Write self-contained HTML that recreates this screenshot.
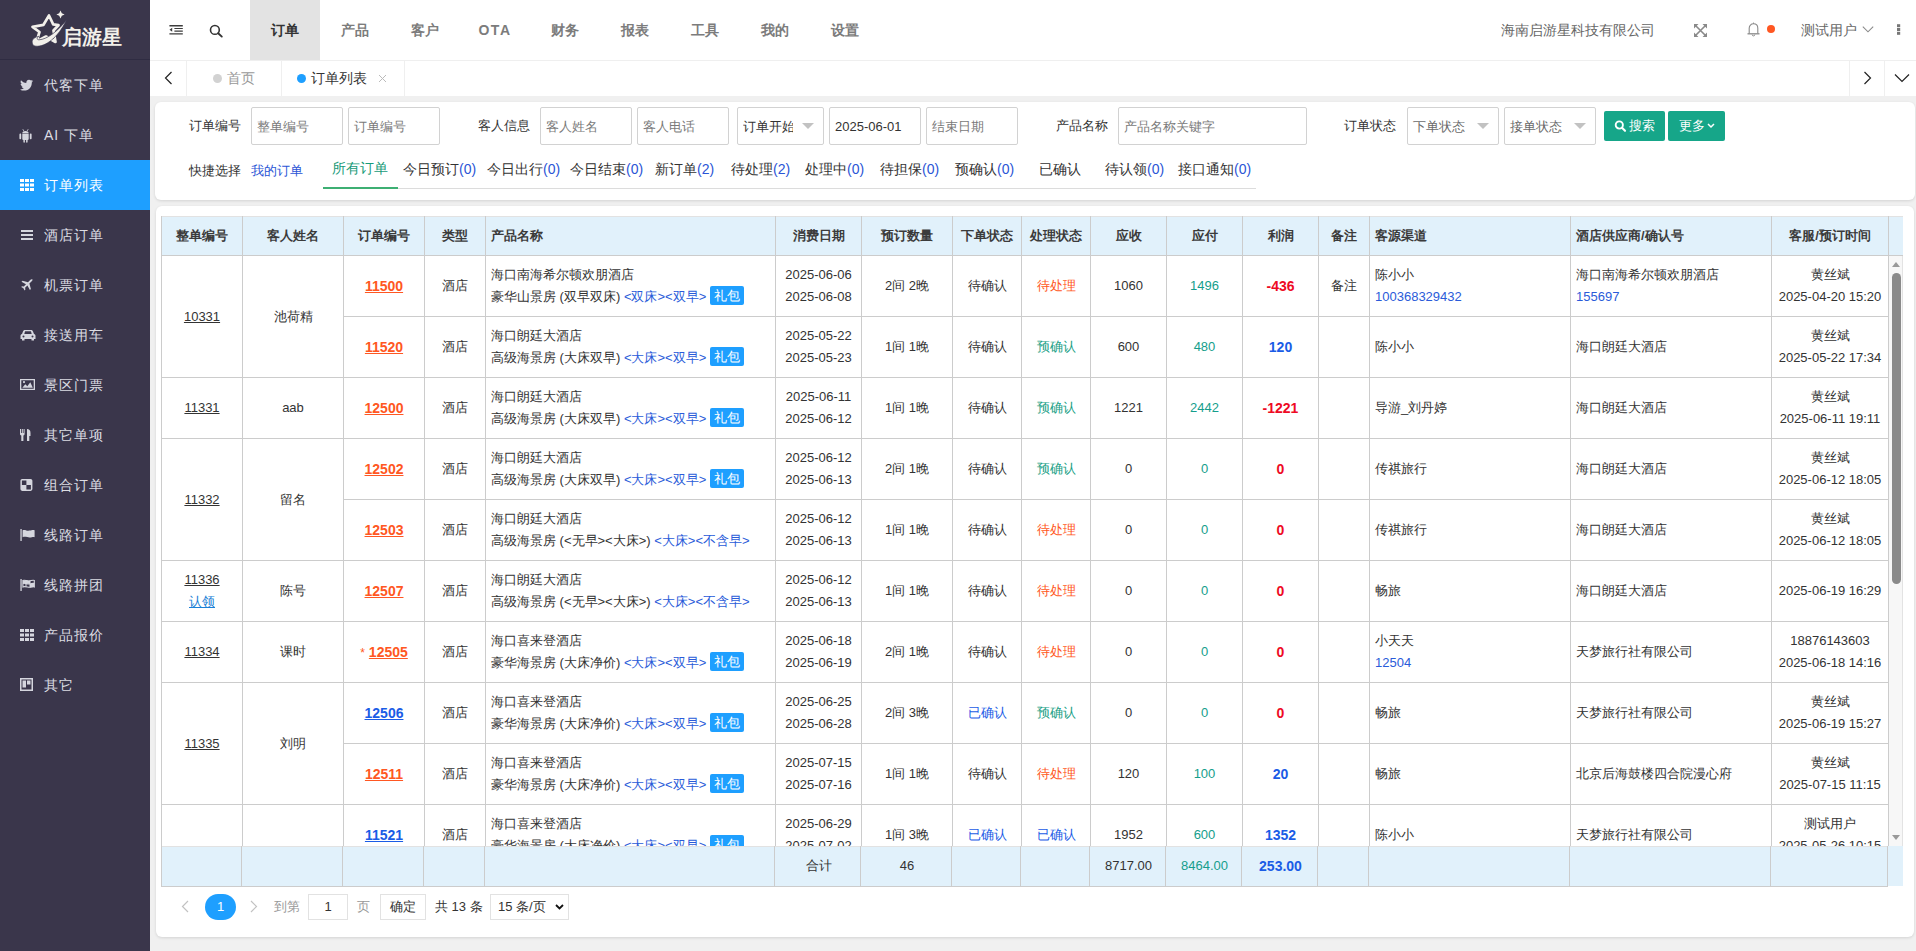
<!DOCTYPE html>
<html><head><meta charset="utf-8"><title>订单列表</title>
<style>
*{margin:0;padding:0;box-sizing:border-box}
html,body{width:1916px;height:951px;overflow:hidden}
body{position:relative;background:#f0f0f0;font-family:"Liberation Sans",sans-serif;color:#333;font-size:13px}
.a{position:absolute}
.side{left:0;top:0;width:150px;height:951px;background:#3a364b}
.logo{left:0;top:0;width:150px;height:60px;border-bottom:1px solid #2f2c42}
.mi{left:0;width:150px;height:50px;color:#dcdde3;font-size:14px}
.mi .t{position:absolute;left:44px;top:0;line-height:50px;white-space:nowrap;letter-spacing:1px}
.mi svg{position:absolute;left:20px;top:18px}
.mi.on{background:#1e9fff;color:#fff}
.top{left:150px;top:0;width:1766px;height:60px;background:#fff}
.nav{top:0;height:60px;line-height:60px;width:70px;text-align:center;font-size:14px;color:#7c7c7c;font-weight:bold}
.nav.on{background:#e3e3e3;color:#333}
.tabs{left:150px;top:60px;width:1766px;height:36px;background:#fff;border-top:1px solid #efefef}
.vl{background:#efefef;width:1px}
.card{background:#fff;border-radius:6px;box-shadow:0 1px 3px rgba(0,0,0,.12)}
.lbl{font-size:13px;color:#333;white-space:nowrap}
.inp{height:38px;border:1px solid #d2d2d2;border-radius:2px;background:#fff;font-size:13px;color:#7a7a7a;line-height:37px;padding-left:5px;white-space:nowrap;overflow:hidden}
.qs{font-size:14px;white-space:nowrap;color:#333}
.qs b{font-weight:normal;color:#2b55d6}
.cell{position:absolute;display:flex;flex-direction:column;justify-content:center;align-items:center;text-align:center;white-space:nowrap;font-size:13px;line-height:22px;color:#333}
.cell.l{align-items:flex-start;padding-left:5px;text-align:left}
.hl{position:absolute;height:1px;background:#cccccc}
.vln{position:absolute;width:1px;background:#cccccc}
.hd{font-weight:bold;color:#3b3b3b}
.ord{font-weight:bold;text-decoration:underline;font-size:14px}
.org{color:#ff5722}
.blu{color:#1a5ce6}
.tl{color:#159e8c}
.grn{color:#17a085}
.red{color:#ee0a24}
.lb{color:#2a5bd9}
.badge{display:inline-block;background:#1e9fff;color:#fff;padding:0 4px;line-height:19px;height:19px;margin-left:4px;border-radius:2px;vertical-align:1px}
.u{text-decoration:underline}
</style></head><body>
<div class="a side"></div>
<div class="a logo"></div>
<svg class="a" style="left:0;top:0" width="150" height="60" viewBox="0 0 150 60">
<path d="M49 15.5 L53.2 24.3 L58.5 25.2 L53.5 30.5 L55.5 42 L46 36.5 L36.5 41.5 L39.5 32 L32.5 26.8 L43.5 24.8 Z" fill="none" stroke="#f2f0ea" stroke-width="2.7" stroke-linejoin="round"/>
<path d="M36 46.2 C45 47 58 38 66.5 20 C58 31 47 39.5 39 39.8 C36.5 39.8 36.8 37.8 38.8 36.3 C35 36.8 31.3 39.5 32.3 43.2 C32.8 45.2 34.3 46.2 36 46.2 Z" fill="#f2f0ea" stroke="#393650" stroke-width="0.7"/>
<path d="M60.5 10.5 L61.8 13.3 L64.6 14.5 L61.8 15.7 L60.5 18.5 L59.2 15.7 L56.4 14.5 L59.2 13.3 Z" fill="#f2f0ea"/>
</svg>
<div class="a" style="left:62px;top:25px;font-size:20px;font-weight:bold;color:#f2f0ea;line-height:24px">启游星</div>
<div class="a mi" style="top:60px"><svg width="14" height="14" viewBox="0 0 14 14"><path d="M13 3 c-.5.2-1 .4-1.5.4.6-.3 1-.8 1.2-1.4-.5.3-1.1.5-1.7.6C10.5 2 9.8 1.7 9 1.7c-1.5 0-2.7 1.2-2.7 2.7 0 .2 0 .4.1.6C4.2 4.9 2.3 3.9 1 2.3c-.2.4-.4.9-.4 1.4 0 .9.5 1.8 1.2 2.3-.4 0-.9-.1-1.2-.3 0 1.3.9 2.4 2.2 2.7-.4.1-.8.1-1.2 0 .3 1.1 1.3 1.9 2.5 1.9C3.200 11 2 11.4.6 11.4H0c1.200.8 2.6 1.200 4.100 1.200 5 0 7.700-4.100 7.700-7.700v-.3C12.300 4.100 12.700 3.600 13 3z" fill="#d5d6de"/></svg><span class="t">代客下单</span></div>
<div class="a mi" style="top:110px"><svg width="14" height="15" viewBox="0 0 14 15" style="left:19px"><path d="M3.300 5.200C3.300 2.300 9.700 2.300 9.700 5.200z M3.300 5.800h6.400v5.200c0 .5-.4.9-.9.9H4.200c-.5 0-.9-.4-.9-.9z M0.400 6.600c0-.6.4-1 .9-1s.9.4.9 1v3.600c0 .6-.4 1-.9 1s-.9-.4-.9-1z M10.800 6.600c0-.6.4-1 .9-1s.9.4.9 1v3.600c0 .6-.4 1-.9 1s-.9-.4-.9-1z M4.400 11.500h1.500v2.600c0 .4-.3.7-.75.7s-.75-.3-.75-.7z M7.100 11.500h1.500v2.600c0 .4-.3.7-.75.7s-.75-.3-.75-.7z" fill="#d5d6de"/><path d="M3.800 1.200l1.100 1.800M9.200 1.200L8.100 3" stroke="#d5d6de" stroke-width=".8"/></svg><span class="t">AI 下单</span></div>
<div class="a mi on" style="top:160px"><svg width="14" height="14" viewBox="0 0 14 14"><path d="M0 1h4v3H0zM5 1h4v3H5zM10 1h4v3h-4zM0 5.5h4v3H0zM5 5.5h4v3H5zM10 5.5h4v3h-4zM0 10h4v3H0zM5 10h4v3H5zM10 10h4v3h-4z" fill="#fff"/></svg><span class="t">订单列表</span></div>
<div class="a mi" style="top:210px"><svg width="14" height="14" viewBox="0 0 14 14"><path d="M1 2h12v2H1zM1 6h12v2H1zM1 10h12v2H1z" fill="#d5d6de"/></svg><span class="t">酒店订单</span></div>
<div class="a mi" style="top:260px"><svg width="14" height="14" viewBox="0 0 14 14"><path d="M12.5 1.5c-.6-.6-1.6-.3-2.300.4L8 4.200 2.5 2.700 1.500 3.700 6 6.200 3.800 8.500 2 8.200 1.200 9l2.200 1.200L4.600 12.400 5.400 11.600 5.100 9.800 7.400 7.500 9.900 12l1-1L9.400 5.500 11.700 3.300c.7-.7 1-1.700.8-1.800z" fill="#d5d6de"/></svg><span class="t">机票订单</span></div>
<div class="a mi" style="top:310px"><svg width="16" height="14" viewBox="0 0 16 14"><path d="M3 3.5C3.300 2.500 4 2 5 2h6c1 0 1.700.5 2 1.500L14 6c1 .3 1.500 1 1.500 2v3h-1.500v1.500h-2.500V11h-7v1.500H2V11H.5V8c0-1 .5-1.700 1.500-2z M4.300 6h7.400l-.6-2.300c-.1-.3-.3-.4-.6-.4H5.500c-.3 0-.5.1-.6.4z M3.500 9.500a1 1 0 100-2 1 1 0 000 2z M12.500 9.500a1 1 0 100-2 1 1 0 000 2z" fill="#d5d6de" fill-rule="evenodd"/></svg><span class="t">接送用车</span></div>
<div class="a mi" style="top:360px"><svg width="15" height="13" viewBox="0 0 15 13"><path d="M0 1h15v11H0z M1.300 2.300v8.400h12.400V2.300z M2.300 9.700l3-3.500 2 2 3-4 2.500 5.500z M4 5.200a1.100 1.100 0 100-2.200 1.100 1.100 0 000 2.200z" fill="#d5d6de" fill-rule="evenodd"/></svg><span class="t">景区门票</span></div>
<div class="a mi" style="top:410px"><svg width="12" height="14" viewBox="0 0 12 14"><path d="M0 1h1v4h.8V1h1v4h.8V1h1v5c0 .8-.5 1.300-1.200 1.400V13H1.300V7.400C.5 7.300 0 6.800 0 6z M7 1c2 0 3.500 1 3.500 4v3H9.300v5H7z" fill="#d5d6de"/></svg><span class="t">其它单项</span></div>
<div class="a mi" style="top:460px"><svg width="14" height="14" viewBox="0 0 14 14"><rect x="0.4" y="0.9" width="12" height="12" rx="1.8" fill="#d5d6de"/><path d="M1.9 2.4h4.5v4.5H1.9z M6.4 6.9h4.5v4.5H6.4z" fill="#3a364b"/></svg><span class="t">组合订单</span></div>
<div class="a mi" style="top:510px"><svg width="16" height="14" viewBox="0 0 16 14"><path d="M0.4 1h1.3v12H0.4z M2.6 2.2C5 1.2 7 3.2 9.5 2.6S13 1.6 14.6 2.2V9.2C12.8 8.6 11.5 9.8 9.5 9.6S5 8.2 2.6 9.2Z" fill="#d5d6de"/></svg><span class="t">线路订单</span></div>
<div class="a mi" style="top:560px"><svg width="16" height="14" viewBox="0 0 16 14"><path d="M0.4 1h1.3v12H0.4z" fill="#d5d6de"/><path d="M2.9 2.4C5 1.5 7 3.4 9.5 2.9S13 1.9 14.3 2.4V8.9C12.8 8.4 11.5 9.4 9.5 9.3S5 8.1 2.9 8.9Z" fill="none" stroke="#d5d6de" stroke-width="1.1"/><path d="M3 5.5C5 4.6 7 6.4 9.5 6S13 5 14.3 5.5" fill="none" stroke="#d5d6de" stroke-width="1.1"/><path d="M6 2.3v6.5 M10 2.7v6.6" stroke="#d5d6de" stroke-width="1"/><path d="M3 2.4L6 2.3V5.5L3 5.5Z M10 5.9L14.3 5.5V8.9L10 9.3Z M6 5.6L10 5.9V2.9L6 2.3Z" fill="#d5d6de"/></svg><span class="t">线路拼团</span></div>
<div class="a mi" style="top:610px"><svg width="14" height="14" viewBox="0 0 14 14"><path d="M0 1h4v3H0zM5 1h4v3H5zM10 1h4v3h-4zM0 5.500h4v3H0zM5 5.500h4v3H5zM10 5.500h4v3h-4zM0 10h4v3H0zM5 10h4v3H5zM10 10h4v3h-4z" fill="#d5d6de"/></svg><span class="t">产品报价</span></div>
<div class="a mi" style="top:660px"><svg width="13" height="13" viewBox="0 0 13 13"><path d="M0 0h13v13H0z M1.500 1.500v10h10v-10z M2.500 2.500h3.500v7H2.500z M7 2.500h3.500v4H7z" fill="#d5d6de" fill-rule="evenodd"/></svg><span class="t">其它</span></div>
<div class="a top"></div>
<svg class="a" style="left:0;top:0" width="240" height="60" viewBox="0 0 240 60"><path d="M169.4 25h13.4v1.4H169.4z M174.4 28h8.4v1.1h-8.4z M174.4 30.6h8.4v1.1h-8.4z M169.4 33.2h13.4v1.4H169.4z M172.2 27.8v4L169.5 29.8z" fill="#3d3d3d"/><circle cx="214.9" cy="29.9" r="4.4" fill="none" stroke="#333" stroke-width="1.6"/><path d="M218.2 33.2l3.6 3.4" stroke="#333" stroke-width="1.9" stroke-linecap="round"/></svg>
<div class="a nav on" style="left:250px">订单</div>
<div class="a nav" style="left:320px">产品</div>
<div class="a nav" style="left:390px">客户</div>
<div class="a nav" style="left:460px"><span style="letter-spacing:1.5px">OTA</span></div>
<div class="a nav" style="left:530px">财务</div>
<div class="a nav" style="left:600px">报表</div>
<div class="a nav" style="left:670px">工具</div>
<div class="a nav" style="left:740px">我的</div>
<div class="a nav" style="left:810px">设置</div>
<div class="a" style="left:1501px;top:0;line-height:60px;font-size:14px;color:#666">海南启游星科技有限公司</div>
<svg class="a" style="left:1694px;top:24px" width="13" height="13" viewBox="0 0 13 13"><path d="M0 0h4.5L0 4.5z M13 0v4.5L8.5 0z M0 13V8.5L4.5 13z M13 13H8.5L13 8.5z" fill="#8a8a8a"/><path d="M1.5 1.5l10 10M11.5 1.5l-10 10" stroke="#8a8a8a" stroke-width="1.6"/></svg>
<svg class="a" style="left:1747px;top:22px" width="13" height="15" viewBox="0 0 13 15"><path d="M2.2 11.5V6.2C2.2 3.6 4 1.8 6.5 1.8S10.8 3.6 10.8 6.2v5.3" fill="none" stroke="#8a8a8a" stroke-width="1.1"/><path d="M0.5 11.8h12" stroke="#8a8a8a" stroke-width="1.3"/><path d="M6.5 0.6v1.2" stroke="#8a8a8a" stroke-width="1"/><path d="M5.2 12.6a1.3 1.3 0 002.6 0" fill="none" stroke="#8a8a8a" stroke-width="1"/></svg>
<div class="a" style="left:1767px;top:25px;width:8px;height:8px;border-radius:50%;background:#ff5722"></div>
<div class="a" style="left:1801px;top:0;line-height:60px;font-size:14px;color:#666">测试用户</div>
<svg class="a" style="left:1862px;top:26px" width="12" height="7" viewBox="0 0 12 7"><path d="M.8.6l5.2 5.2 5.2-5.2" fill="none" stroke="#8a8a8a" stroke-width="1.1"/></svg>
<svg class="a" style="left:1896px;top:24px" width="5" height="12" viewBox="0 0 5 12"><rect x="1" y=".2" width="3.2" height="3" fill="#777"/><rect x="1" y="4" width="3.2" height="3" fill="#777"/><rect x="1" y="7.8" width="3.2" height="3" fill="#777"/></svg>
<div class="a tabs"></div>
<div class="a vl" style="left:186px;top:61px;height:35px"></div>
<div class="a vl" style="left:281px;top:61px;height:35px"></div>
<div class="a vl" style="left:404px;top:61px;height:35px"></div>
<div class="a vl" style="left:1849px;top:61px;height:35px"></div>
<div class="a vl" style="left:1884px;top:61px;height:35px"></div>
<svg class="a" style="left:164px;top:71px" width="9" height="14" viewBox="0 0 9 14"><path d="M7.500 1L1.500 7l6 6" fill="none" stroke="#222" stroke-width="1.200"/></svg>
<svg class="a" style="left:1863px;top:71px" width="9" height="14" viewBox="0 0 9 14"><path d="M1.500 1l6 6-6 6" fill="none" stroke="#222" stroke-width="1.200"/></svg>
<svg class="a" style="left:1894px;top:73px" width="16" height="10" viewBox="0 0 16 10"><path d="M1 1.500l7 7 7-7" fill="none" stroke="#222" stroke-width="1.200"/></svg>
<div class="a" style="left:213px;top:74px;width:9px;height:9px;border-radius:50%;background:#d2d2d2"></div>
<div class="a" style="left:227px;top:60px;line-height:36px;font-size:14px;color:#999">首页</div>
<div class="a" style="left:297px;top:74px;width:9px;height:9px;border-radius:50%;background:#1e9fff"></div>
<div class="a" style="left:311px;top:60px;line-height:36px;font-size:14px;color:#333">订单列表</div>
<svg class="a" style="left:378px;top:74px" width="9" height="9" viewBox="0 0 9 9"><path d="M1 1l7 7M8 1L1 8" stroke="#bbb" stroke-width="1"/></svg>
<div class="a card" style="left:155px;top:102px;width:1760px;height:98px"></div>
<div class="a lbl" style="left:189px;top:116px;line-height:20px">订单编号</div>
<div class="a inp" style="left:251px;top:107px;width:92px;color:#7a7a7a">整单编号</div>
<div class="a inp" style="left:348px;top:107px;width:92px;color:#7a7a7a">订单编号</div>
<div class="a lbl" style="left:478px;top:116px;line-height:20px">客人信息</div>
<div class="a inp" style="left:540px;top:107px;width:92px;color:#7a7a7a">客人姓名</div>
<div class="a inp" style="left:637px;top:107px;width:92px;color:#7a7a7a">客人电话</div>
<div class="a inp" style="left:737px;top:107px;width:87px;color:#333"><span style="display:inline-block;width:50px;overflow:hidden;vertical-align:top">订单开始</span></div>
<div class="a" style="left:802px;top:123px;width:0;height:0;border-left:6px solid transparent;border-right:6px solid transparent;border-top:6px solid #c2c2c2"></div>
<div class="a inp" style="left:829px;top:107px;width:92px;color:#333">2025-06-01</div>
<div class="a inp" style="left:926px;top:107px;width:92px;color:#7a7a7a">结束日期</div>
<div class="a lbl" style="left:1056px;top:116px;line-height:20px">产品名称</div>
<div class="a inp" style="left:1118px;top:107px;width:189px;color:#7a7a7a">产品名称关键字</div>
<div class="a lbl" style="left:1344px;top:116px;line-height:20px">订单状态</div>
<div class="a inp" style="left:1407px;top:107px;width:92px;color:#6a6a6a">下单状态</div>
<div class="a" style="left:1477px;top:123px;width:0;height:0;border-left:6px solid transparent;border-right:6px solid transparent;border-top:6px solid #c2c2c2"></div>
<div class="a inp" style="left:1504px;top:107px;width:92px;color:#6a6a6a">接单状态</div>
<div class="a" style="left:1574px;top:123px;width:0;height:0;border-left:6px solid transparent;border-right:6px solid transparent;border-top:6px solid #c2c2c2"></div>
<div class="a" style="left:1604px;top:111px;width:61px;height:30px;background:#16a689;border-radius:2px;color:#fff;font-size:13px;line-height:30px;padding-left:25px">搜索</div>
<svg class="a" style="left:1614px;top:120px" width="13" height="13" viewBox="0 0 13 13"><circle cx="5.300" cy="5" r="3.600" fill="none" stroke="#fff" stroke-width="1.900"/><path d="M8 7.800l3 3" stroke="#fff" stroke-width="2.100" stroke-linecap="round"/></svg>
<div class="a" style="left:1668px;top:111px;width:57px;height:30px;background:#16a689;border-radius:2px;color:#fff;font-size:13px;line-height:30px;padding-left:11px">更多</div>
<svg class="a" style="left:1707px;top:123px" width="8" height="6" viewBox="0 0 8 6"><path d="M1 1l3 3 3-3" fill="none" stroke="#fff" stroke-width="1.500"/></svg>
<div class="a lbl" style="left:189px;top:161px;line-height:20px">快捷选择</div>
<div class="a qs" style="left:251px;top:161px;line-height:20px;color:#2b55d6;font-size:13px">我的订单</div>
<div class="a" style="left:323px;top:188px;width:933px;height:1px;background:#dcdcdc"></div>
<div class="a" style="left:323px;top:187px;width:75px;height:2px;background:#3daf73"></div>
<div class="a qs" style="left:332px;top:158px;line-height:20px;color:#179a78">所有订单</div>
<div class="a qs" style="left:403px;top:159px;line-height:20px">今日预订<b>(0)</b></div>
<div class="a qs" style="left:487px;top:159px;line-height:20px">今日出行<b>(0)</b></div>
<div class="a qs" style="left:570px;top:159px;line-height:20px">今日结束<b>(0)</b></div>
<div class="a qs" style="left:655px;top:159px;line-height:20px">新订单<b>(2)</b></div>
<div class="a qs" style="left:731px;top:159px;line-height:20px">待处理<b>(2)</b></div>
<div class="a qs" style="left:805px;top:159px;line-height:20px">处理中<b>(0)</b></div>
<div class="a qs" style="left:880px;top:159px;line-height:20px">待担保<b>(0)</b></div>
<div class="a qs" style="left:955px;top:159px;line-height:20px">预确认<b>(0)</b></div>
<div class="a qs" style="left:1039px;top:159px;line-height:20px">已确认</div>
<div class="a qs" style="left:1105px;top:159px;line-height:20px">待认领<b>(0)</b></div>
<div class="a qs" style="left:1178px;top:159px;line-height:20px">接口通知<b>(0)</b></div>
<div class="a card" style="left:156px;top:206px;width:1758px;height:731px"></div>
<div class="a" style="left:161px;top:216px;width:1742px;height:40px;background:#e1f1fb"></div>
<div class="cell" style="left:162px;top:216px;width:80px;height:39px;"><span class="hd">整单编号</span></div>
<div class="cell" style="left:243px;top:216px;width:100px;height:39px;"><span class="hd">客人姓名</span></div>
<div class="cell" style="left:344px;top:216px;width:80px;height:39px;"><span class="hd">订单编号</span></div>
<div class="cell" style="left:425px;top:216px;width:60px;height:39px;"><span class="hd">类型</span></div>
<div class="cell l" style="left:486px;top:216px;width:289px;height:39px;"><span class="hd">产品名称</span></div>
<div class="cell" style="left:776px;top:216px;width:85px;height:39px;"><span class="hd">消费日期</span></div>
<div class="cell" style="left:862px;top:216px;width:90px;height:39px;"><span class="hd">预订数量</span></div>
<div class="cell" style="left:953px;top:216px;width:68px;height:39px;"><span class="hd">下单状态</span></div>
<div class="cell" style="left:1022px;top:216px;width:68px;height:39px;"><span class="hd">处理状态</span></div>
<div class="cell" style="left:1091px;top:216px;width:75px;height:39px;"><span class="hd">应收</span></div>
<div class="cell" style="left:1167px;top:216px;width:75px;height:39px;"><span class="hd">应付</span></div>
<div class="cell" style="left:1243px;top:216px;width:75px;height:39px;"><span class="hd">利润</span></div>
<div class="cell" style="left:1319px;top:216px;width:50px;height:39px;"><span class="hd">备注</span></div>
<div class="cell l" style="left:1370px;top:216px;width:200px;height:39px;"><span class="hd">客源渠道</span></div>
<div class="cell l" style="left:1571px;top:216px;width:200px;height:39px;"><span class="hd">酒店供应商/确认号</span></div>
<div class="cell" style="left:1772px;top:216px;width:116px;height:39px;"><span class="hd">客服/预订时间</span></div>
<div class="hl" style="left:161px;top:216px;width:1742px;background:#e2e2e2"></div>
<div class="hl" style="left:161px;top:255px;width:1742px"></div>
<div class="vln" style="left:161px;top:216px;height:39px"></div>
<div class="vln" style="left:242px;top:216px;height:39px"></div>
<div class="vln" style="left:343px;top:216px;height:39px"></div>
<div class="vln" style="left:424px;top:216px;height:39px"></div>
<div class="vln" style="left:485px;top:216px;height:39px"></div>
<div class="vln" style="left:775px;top:216px;height:39px"></div>
<div class="vln" style="left:861px;top:216px;height:39px"></div>
<div class="vln" style="left:952px;top:216px;height:39px"></div>
<div class="vln" style="left:1021px;top:216px;height:39px"></div>
<div class="vln" style="left:1090px;top:216px;height:39px"></div>
<div class="vln" style="left:1166px;top:216px;height:39px"></div>
<div class="vln" style="left:1242px;top:216px;height:39px"></div>
<div class="vln" style="left:1318px;top:216px;height:39px"></div>
<div class="vln" style="left:1369px;top:216px;height:39px"></div>
<div class="vln" style="left:1570px;top:216px;height:39px"></div>
<div class="vln" style="left:1771px;top:216px;height:39px"></div>
<div class="vln" style="left:1888px;top:216px;height:39px"></div>
<div class="a" style="left:0;top:0;width:1916px;height:951px;clip-path:inset(256px 0 105px 0)">
<div class="cell" style="left:162px;top:256px;width:80px;height:121px;"><span class="u">10331</span></div>
<div class="cell" style="left:243px;top:256px;width:100px;height:121px;">池荷精</div>
<div class="cell" style="left:162px;top:378px;width:80px;height:60px;"><span class="u">11331</span></div>
<div class="cell" style="left:243px;top:378px;width:100px;height:60px;">aab</div>
<div class="cell" style="left:162px;top:439px;width:80px;height:121px;"><span class="u">11332</span></div>
<div class="cell" style="left:243px;top:439px;width:100px;height:121px;">留名</div>
<div class="cell" style="left:162px;top:561px;width:80px;height:60px;"><span class="u">11336</span><span class="u blu" style="color:#1a7fd6">认领</span></div>
<div class="cell" style="left:243px;top:561px;width:100px;height:60px;">陈号</div>
<div class="cell" style="left:162px;top:622px;width:80px;height:60px;"><span class="u">11334</span></div>
<div class="cell" style="left:243px;top:622px;width:100px;height:60px;">课时</div>
<div class="cell" style="left:162px;top:683px;width:80px;height:121px;"><span class="u">11335</span></div>
<div class="cell" style="left:243px;top:683px;width:100px;height:121px;">刘明</div>
<div class="cell" style="left:162px;top:805px;width:80px;height:121px;"></div>
<div class="cell" style="left:243px;top:805px;width:100px;height:121px;"></div>
<div class="cell" style="left:344px;top:256px;width:80px;height:60px;"><div><span class="ord org">11500</span></div></div>
<div class="cell" style="left:425px;top:256px;width:60px;height:60px;">酒店</div>
<div class="cell l" style="left:486px;top:256px;width:289px;height:60px;"><div>海口南海希尔顿欢朋酒店</div><div>豪华山景房 (双早双床) <span class="lb">&lt;双床&gt;&lt;双早&gt;</span><span class="badge">礼包</span></div></div>
<div class="cell" style="left:776px;top:256px;width:85px;height:60px;"><div>2025-06-06</div><div>2025-06-08</div></div>
<div class="cell" style="left:862px;top:256px;width:90px;height:60px;">2间 2晚</div>
<div class="cell" style="left:953px;top:256px;width:68px;height:60px;"><span class="">待确认</span></div>
<div class="cell" style="left:1022px;top:256px;width:68px;height:60px;"><span class="org">待处理</span></div>
<div class="cell" style="left:1091px;top:256px;width:75px;height:60px;">1060</div>
<div class="cell" style="left:1167px;top:256px;width:75px;height:60px;"><span class="tl">1496</span></div>
<div class="cell" style="left:1243px;top:256px;width:75px;height:60px;"><b class="red" style="font-size:14px">-436</b></div>
<div class="cell" style="left:1319px;top:256px;width:50px;height:60px;">备注</div>
<div class="cell l" style="left:1370px;top:256px;width:200px;height:60px;"><div>陈小小</div><div><span class="lb">100368329432</span></div></div>
<div class="cell l" style="left:1571px;top:256px;width:200px;height:60px;"><div>海口南海希尔顿欢朋酒店</div><div><span class="lb">155697</span></div></div>
<div class="cell" style="left:1772px;top:256px;width:116px;height:60px;"><div>黄丝斌</div><div>2025-04-20 15:20</div></div>
<div class="cell" style="left:344px;top:317px;width:80px;height:60px;"><div><span class="ord org">11520</span></div></div>
<div class="cell" style="left:425px;top:317px;width:60px;height:60px;">酒店</div>
<div class="cell l" style="left:486px;top:317px;width:289px;height:60px;"><div>海口朗廷大酒店</div><div>高级海景房 (大床双早) <span class="lb">&lt;大床&gt;&lt;双早&gt;</span><span class="badge">礼包</span></div></div>
<div class="cell" style="left:776px;top:317px;width:85px;height:60px;"><div>2025-05-22</div><div>2025-05-23</div></div>
<div class="cell" style="left:862px;top:317px;width:90px;height:60px;">1间 1晚</div>
<div class="cell" style="left:953px;top:317px;width:68px;height:60px;"><span class="">待确认</span></div>
<div class="cell" style="left:1022px;top:317px;width:68px;height:60px;"><span class="grn">预确认</span></div>
<div class="cell" style="left:1091px;top:317px;width:75px;height:60px;">600</div>
<div class="cell" style="left:1167px;top:317px;width:75px;height:60px;"><span class="tl">480</span></div>
<div class="cell" style="left:1243px;top:317px;width:75px;height:60px;"><b class="blu" style="font-size:14px">120</b></div>
<div class="cell" style="left:1319px;top:317px;width:50px;height:60px;"></div>
<div class="cell l" style="left:1370px;top:317px;width:200px;height:60px;"><div>陈小小</div></div>
<div class="cell l" style="left:1571px;top:317px;width:200px;height:60px;"><div>海口朗廷大酒店</div></div>
<div class="cell" style="left:1772px;top:317px;width:116px;height:60px;"><div>黄丝斌</div><div>2025-05-22 17:34</div></div>
<div class="cell" style="left:344px;top:378px;width:80px;height:60px;"><div><span class="ord org">12500</span></div></div>
<div class="cell" style="left:425px;top:378px;width:60px;height:60px;">酒店</div>
<div class="cell l" style="left:486px;top:378px;width:289px;height:60px;"><div>海口朗廷大酒店</div><div>高级海景房 (大床双早) <span class="lb">&lt;大床&gt;&lt;双早&gt;</span><span class="badge">礼包</span></div></div>
<div class="cell" style="left:776px;top:378px;width:85px;height:60px;"><div>2025-06-11</div><div>2025-06-12</div></div>
<div class="cell" style="left:862px;top:378px;width:90px;height:60px;">1间 1晚</div>
<div class="cell" style="left:953px;top:378px;width:68px;height:60px;"><span class="">待确认</span></div>
<div class="cell" style="left:1022px;top:378px;width:68px;height:60px;"><span class="grn">预确认</span></div>
<div class="cell" style="left:1091px;top:378px;width:75px;height:60px;">1221</div>
<div class="cell" style="left:1167px;top:378px;width:75px;height:60px;"><span class="tl">2442</span></div>
<div class="cell" style="left:1243px;top:378px;width:75px;height:60px;"><b class="red" style="font-size:14px">-1221</b></div>
<div class="cell" style="left:1319px;top:378px;width:50px;height:60px;"></div>
<div class="cell l" style="left:1370px;top:378px;width:200px;height:60px;"><div>导游_刘丹婷</div></div>
<div class="cell l" style="left:1571px;top:378px;width:200px;height:60px;"><div>海口朗廷大酒店</div></div>
<div class="cell" style="left:1772px;top:378px;width:116px;height:60px;"><div>黄丝斌</div><div>2025-06-11 19:11</div></div>
<div class="cell" style="left:344px;top:439px;width:80px;height:60px;"><div><span class="ord org">12502</span></div></div>
<div class="cell" style="left:425px;top:439px;width:60px;height:60px;">酒店</div>
<div class="cell l" style="left:486px;top:439px;width:289px;height:60px;"><div>海口朗廷大酒店</div><div>高级海景房 (大床双早) <span class="lb">&lt;大床&gt;&lt;双早&gt;</span><span class="badge">礼包</span></div></div>
<div class="cell" style="left:776px;top:439px;width:85px;height:60px;"><div>2025-06-12</div><div>2025-06-13</div></div>
<div class="cell" style="left:862px;top:439px;width:90px;height:60px;">2间 1晚</div>
<div class="cell" style="left:953px;top:439px;width:68px;height:60px;"><span class="">待确认</span></div>
<div class="cell" style="left:1022px;top:439px;width:68px;height:60px;"><span class="grn">预确认</span></div>
<div class="cell" style="left:1091px;top:439px;width:75px;height:60px;">0</div>
<div class="cell" style="left:1167px;top:439px;width:75px;height:60px;"><span class="tl">0</span></div>
<div class="cell" style="left:1243px;top:439px;width:75px;height:60px;"><b class="red" style="font-size:14px">0</b></div>
<div class="cell" style="left:1319px;top:439px;width:50px;height:60px;"></div>
<div class="cell l" style="left:1370px;top:439px;width:200px;height:60px;"><div>传祺旅行</div></div>
<div class="cell l" style="left:1571px;top:439px;width:200px;height:60px;"><div>海口朗廷大酒店</div></div>
<div class="cell" style="left:1772px;top:439px;width:116px;height:60px;"><div>黄丝斌</div><div>2025-06-12 18:05</div></div>
<div class="cell" style="left:344px;top:500px;width:80px;height:60px;"><div><span class="ord org">12503</span></div></div>
<div class="cell" style="left:425px;top:500px;width:60px;height:60px;">酒店</div>
<div class="cell l" style="left:486px;top:500px;width:289px;height:60px;"><div>海口朗廷大酒店</div><div>高级海景房 (&lt;无早&gt;&lt;大床&gt;) <span class="lb">&lt;大床&gt;&lt;不含早&gt;</span></div></div>
<div class="cell" style="left:776px;top:500px;width:85px;height:60px;"><div>2025-06-12</div><div>2025-06-13</div></div>
<div class="cell" style="left:862px;top:500px;width:90px;height:60px;">1间 1晚</div>
<div class="cell" style="left:953px;top:500px;width:68px;height:60px;"><span class="">待确认</span></div>
<div class="cell" style="left:1022px;top:500px;width:68px;height:60px;"><span class="org">待处理</span></div>
<div class="cell" style="left:1091px;top:500px;width:75px;height:60px;">0</div>
<div class="cell" style="left:1167px;top:500px;width:75px;height:60px;"><span class="tl">0</span></div>
<div class="cell" style="left:1243px;top:500px;width:75px;height:60px;"><b class="red" style="font-size:14px">0</b></div>
<div class="cell" style="left:1319px;top:500px;width:50px;height:60px;"></div>
<div class="cell l" style="left:1370px;top:500px;width:200px;height:60px;"><div>传祺旅行</div></div>
<div class="cell l" style="left:1571px;top:500px;width:200px;height:60px;"><div>海口朗廷大酒店</div></div>
<div class="cell" style="left:1772px;top:500px;width:116px;height:60px;"><div>黄丝斌</div><div>2025-06-12 18:05</div></div>
<div class="cell" style="left:344px;top:561px;width:80px;height:60px;"><div><span class="ord org">12507</span></div></div>
<div class="cell" style="left:425px;top:561px;width:60px;height:60px;">酒店</div>
<div class="cell l" style="left:486px;top:561px;width:289px;height:60px;"><div>海口朗廷大酒店</div><div>高级海景房 (&lt;无早&gt;&lt;大床&gt;) <span class="lb">&lt;大床&gt;&lt;不含早&gt;</span></div></div>
<div class="cell" style="left:776px;top:561px;width:85px;height:60px;"><div>2025-06-12</div><div>2025-06-13</div></div>
<div class="cell" style="left:862px;top:561px;width:90px;height:60px;">1间 1晚</div>
<div class="cell" style="left:953px;top:561px;width:68px;height:60px;"><span class="">待确认</span></div>
<div class="cell" style="left:1022px;top:561px;width:68px;height:60px;"><span class="org">待处理</span></div>
<div class="cell" style="left:1091px;top:561px;width:75px;height:60px;">0</div>
<div class="cell" style="left:1167px;top:561px;width:75px;height:60px;"><span class="tl">0</span></div>
<div class="cell" style="left:1243px;top:561px;width:75px;height:60px;"><b class="red" style="font-size:14px">0</b></div>
<div class="cell" style="left:1319px;top:561px;width:50px;height:60px;"></div>
<div class="cell l" style="left:1370px;top:561px;width:200px;height:60px;"><div>畅旅</div></div>
<div class="cell l" style="left:1571px;top:561px;width:200px;height:60px;"><div>海口朗廷大酒店</div></div>
<div class="cell" style="left:1772px;top:561px;width:116px;height:60px;"><div>2025-06-19 16:29</div></div>
<div class="cell" style="left:344px;top:622px;width:80px;height:60px;"><div><span class="org" style="font-size:12px;margin-right:4px">*</span><span class="ord org">12505</span></div></div>
<div class="cell" style="left:425px;top:622px;width:60px;height:60px;">酒店</div>
<div class="cell l" style="left:486px;top:622px;width:289px;height:60px;"><div>海口喜来登酒店</div><div>豪华海景房 (大床净价) <span class="lb">&lt;大床&gt;&lt;双早&gt;</span><span class="badge">礼包</span></div></div>
<div class="cell" style="left:776px;top:622px;width:85px;height:60px;"><div>2025-06-18</div><div>2025-06-19</div></div>
<div class="cell" style="left:862px;top:622px;width:90px;height:60px;">2间 1晚</div>
<div class="cell" style="left:953px;top:622px;width:68px;height:60px;"><span class="">待确认</span></div>
<div class="cell" style="left:1022px;top:622px;width:68px;height:60px;"><span class="org">待处理</span></div>
<div class="cell" style="left:1091px;top:622px;width:75px;height:60px;">0</div>
<div class="cell" style="left:1167px;top:622px;width:75px;height:60px;"><span class="tl">0</span></div>
<div class="cell" style="left:1243px;top:622px;width:75px;height:60px;"><b class="red" style="font-size:14px">0</b></div>
<div class="cell" style="left:1319px;top:622px;width:50px;height:60px;"></div>
<div class="cell l" style="left:1370px;top:622px;width:200px;height:60px;"><div>小天天</div><div><span class="lb">12504</span></div></div>
<div class="cell l" style="left:1571px;top:622px;width:200px;height:60px;"><div>天梦旅行社有限公司</div></div>
<div class="cell" style="left:1772px;top:622px;width:116px;height:60px;"><div>18876143603</div><div>2025-06-18 14:16</div></div>
<div class="cell" style="left:344px;top:683px;width:80px;height:60px;"><div><span class="ord blu">12506</span></div></div>
<div class="cell" style="left:425px;top:683px;width:60px;height:60px;">酒店</div>
<div class="cell l" style="left:486px;top:683px;width:289px;height:60px;"><div>海口喜来登酒店</div><div>豪华海景房 (大床净价) <span class="lb">&lt;大床&gt;&lt;双早&gt;</span><span class="badge">礼包</span></div></div>
<div class="cell" style="left:776px;top:683px;width:85px;height:60px;"><div>2025-06-25</div><div>2025-06-28</div></div>
<div class="cell" style="left:862px;top:683px;width:90px;height:60px;">2间 3晚</div>
<div class="cell" style="left:953px;top:683px;width:68px;height:60px;"><span class="blu">已确认</span></div>
<div class="cell" style="left:1022px;top:683px;width:68px;height:60px;"><span class="grn">预确认</span></div>
<div class="cell" style="left:1091px;top:683px;width:75px;height:60px;">0</div>
<div class="cell" style="left:1167px;top:683px;width:75px;height:60px;"><span class="tl">0</span></div>
<div class="cell" style="left:1243px;top:683px;width:75px;height:60px;"><b class="red" style="font-size:14px">0</b></div>
<div class="cell" style="left:1319px;top:683px;width:50px;height:60px;"></div>
<div class="cell l" style="left:1370px;top:683px;width:200px;height:60px;"><div>畅旅</div></div>
<div class="cell l" style="left:1571px;top:683px;width:200px;height:60px;"><div>天梦旅行社有限公司</div></div>
<div class="cell" style="left:1772px;top:683px;width:116px;height:60px;"><div>黄丝斌</div><div>2025-06-19 15:27</div></div>
<div class="cell" style="left:344px;top:744px;width:80px;height:60px;"><div><span class="ord org">12511</span></div></div>
<div class="cell" style="left:425px;top:744px;width:60px;height:60px;">酒店</div>
<div class="cell l" style="left:486px;top:744px;width:289px;height:60px;"><div>海口喜来登酒店</div><div>豪华海景房 (大床净价) <span class="lb">&lt;大床&gt;&lt;双早&gt;</span><span class="badge">礼包</span></div></div>
<div class="cell" style="left:776px;top:744px;width:85px;height:60px;"><div>2025-07-15</div><div>2025-07-16</div></div>
<div class="cell" style="left:862px;top:744px;width:90px;height:60px;">1间 1晚</div>
<div class="cell" style="left:953px;top:744px;width:68px;height:60px;"><span class="">待确认</span></div>
<div class="cell" style="left:1022px;top:744px;width:68px;height:60px;"><span class="org">待处理</span></div>
<div class="cell" style="left:1091px;top:744px;width:75px;height:60px;">120</div>
<div class="cell" style="left:1167px;top:744px;width:75px;height:60px;"><span class="tl">100</span></div>
<div class="cell" style="left:1243px;top:744px;width:75px;height:60px;"><b class="blu" style="font-size:14px">20</b></div>
<div class="cell" style="left:1319px;top:744px;width:50px;height:60px;"></div>
<div class="cell l" style="left:1370px;top:744px;width:200px;height:60px;"><div>畅旅</div></div>
<div class="cell l" style="left:1571px;top:744px;width:200px;height:60px;"><div>北京后海鼓楼四合院漫心府</div></div>
<div class="cell" style="left:1772px;top:744px;width:116px;height:60px;"><div>黄丝斌</div><div>2025-07-15 11:15</div></div>
<div class="cell" style="left:344px;top:805px;width:80px;height:60px;"><div><span class="ord blu">11521</span></div></div>
<div class="cell" style="left:425px;top:805px;width:60px;height:60px;">酒店</div>
<div class="cell l" style="left:486px;top:805px;width:289px;height:60px;"><div>海口喜来登酒店</div><div>豪华海景房 (大床净价) <span class="lb">&lt;大床&gt;&lt;双早&gt;</span><span class="badge">礼包</span></div></div>
<div class="cell" style="left:776px;top:805px;width:85px;height:60px;"><div>2025-06-29</div><div>2025-07-02</div></div>
<div class="cell" style="left:862px;top:805px;width:90px;height:60px;">1间 3晚</div>
<div class="cell" style="left:953px;top:805px;width:68px;height:60px;"><span class="blu">已确认</span></div>
<div class="cell" style="left:1022px;top:805px;width:68px;height:60px;"><span class="blu">已确认</span></div>
<div class="cell" style="left:1091px;top:805px;width:75px;height:60px;">1952</div>
<div class="cell" style="left:1167px;top:805px;width:75px;height:60px;"><span class="tl">600</span></div>
<div class="cell" style="left:1243px;top:805px;width:75px;height:60px;"><b class="blu" style="font-size:14px">1352</b></div>
<div class="cell" style="left:1319px;top:805px;width:50px;height:60px;"></div>
<div class="cell l" style="left:1370px;top:805px;width:200px;height:60px;"><div>陈小小</div></div>
<div class="cell l" style="left:1571px;top:805px;width:200px;height:60px;"><div>天梦旅行社有限公司</div></div>
<div class="cell" style="left:1772px;top:805px;width:116px;height:60px;"><div>测试用户</div><div>2025-05-26 10:15</div></div>
<div class="hl" style="left:343px;top:316px;width:1545px"></div>
<div class="hl" style="left:161px;top:377px;width:1727px"></div>
<div class="hl" style="left:161px;top:438px;width:1727px"></div>
<div class="hl" style="left:343px;top:499px;width:1545px"></div>
<div class="hl" style="left:161px;top:560px;width:1727px"></div>
<div class="hl" style="left:161px;top:621px;width:1727px"></div>
<div class="hl" style="left:161px;top:682px;width:1727px"></div>
<div class="hl" style="left:343px;top:743px;width:1545px"></div>
<div class="hl" style="left:161px;top:804px;width:1727px"></div>
<div class="hl" style="left:343px;top:865px;width:1545px"></div>
<div class="vln" style="left:161px;top:256px;height:600px"></div>
<div class="vln" style="left:242px;top:256px;height:600px"></div>
<div class="vln" style="left:343px;top:256px;height:600px"></div>
<div class="vln" style="left:424px;top:256px;height:600px"></div>
<div class="vln" style="left:485px;top:256px;height:600px"></div>
<div class="vln" style="left:775px;top:256px;height:600px"></div>
<div class="vln" style="left:861px;top:256px;height:600px"></div>
<div class="vln" style="left:952px;top:256px;height:600px"></div>
<div class="vln" style="left:1021px;top:256px;height:600px"></div>
<div class="vln" style="left:1090px;top:256px;height:600px"></div>
<div class="vln" style="left:1166px;top:256px;height:600px"></div>
<div class="vln" style="left:1242px;top:256px;height:600px"></div>
<div class="vln" style="left:1318px;top:256px;height:600px"></div>
<div class="vln" style="left:1369px;top:256px;height:600px"></div>
<div class="vln" style="left:1570px;top:256px;height:600px"></div>
<div class="vln" style="left:1771px;top:256px;height:600px"></div>
<div class="vln" style="left:1888px;top:256px;height:600px"></div>
<div class="a" style="left:1889px;top:256px;width:14px;height:590px;background:#f7f7f7;border-right:1px solid #e3e3e3"></div>
<div class="a" style="left:1892px;top:262px;width:0;height:0;border-left:4.5px solid transparent;border-right:4.5px solid transparent;border-bottom:5px solid #999"></div>
<div class="a" style="left:1892px;top:273px;width:9px;height:311px;border-radius:5px;background:#8a8a8a"></div>
<div class="a" style="left:1892px;top:835px;width:0;height:0;border-left:4.5px solid transparent;border-right:4.5px solid transparent;border-top:5px solid #999"></div>
</div>
<div class="a" style="left:161px;top:846px;width:1742px;height:40px;background:#e1f1fb"></div>
<div class="hl" style="left:161px;top:846px;width:1727px;background:#e2e2e2"></div>
<div class="hl" style="left:161px;top:886px;width:1727px"></div>
<div class="vln" style="left:161px;top:846px;height:40px"></div>
<div class="vln" style="left:241px;top:846px;height:40px"></div>
<div class="vln" style="left:342px;top:846px;height:40px"></div>
<div class="vln" style="left:423px;top:846px;height:40px"></div>
<div class="vln" style="left:484px;top:846px;height:40px"></div>
<div class="vln" style="left:774px;top:846px;height:40px"></div>
<div class="vln" style="left:860px;top:846px;height:40px"></div>
<div class="vln" style="left:951px;top:846px;height:40px"></div>
<div class="vln" style="left:1020px;top:846px;height:40px"></div>
<div class="vln" style="left:1089px;top:846px;height:40px"></div>
<div class="vln" style="left:1165px;top:846px;height:40px"></div>
<div class="vln" style="left:1241px;top:846px;height:40px"></div>
<div class="vln" style="left:1317px;top:846px;height:40px"></div>
<div class="vln" style="left:1368px;top:846px;height:40px"></div>
<div class="vln" style="left:1569px;top:846px;height:40px"></div>
<div class="vln" style="left:1770px;top:846px;height:40px"></div>
<div class="vln" style="left:1887px;top:846px;height:40px"></div>
<div class="cell" style="left:776px;top:846px;width:85px;height:40px;">合计</div>
<div class="cell" style="left:862px;top:846px;width:90px;height:40px;">46</div>
<div class="cell" style="left:1091px;top:846px;width:75px;height:40px;">8717.00</div>
<div class="cell" style="left:1167px;top:846px;width:75px;height:40px;"><span class="tl">8464.00</span></div>
<div class="cell" style="left:1243px;top:846px;width:75px;height:40px;"><b class="blu" style="font-size:14px">253.00</b></div>
<svg class="a" style="left:181px;top:900px" width="8" height="13" viewBox="0 0 8 13"><path d="M7 1L1.500 6.500 7 12" fill="none" stroke="#c2c2c2" stroke-width="1.200"/></svg>
<div class="a" style="left:205px;top:894px;width:31px;height:26px;border-radius:13px;background:#1e9fff;color:#fff;text-align:center;line-height:26px;font-size:13px">1</div>
<svg class="a" style="left:250px;top:900px" width="8" height="13" viewBox="0 0 8 13"><path d="M1 1l5.500 5.500L1 12" fill="none" stroke="#c2c2c2" stroke-width="1.200"/></svg>
<div class="a" style="left:274px;top:896px;line-height:22px;color:#999">到第</div>
<div class="a" style="left:308px;top:894px;width:40px;height:26px;border:1px solid #e2e2e2;text-align:center;line-height:24px">1</div>
<div class="a" style="left:357px;top:896px;line-height:22px;color:#999">页</div>
<div class="a" style="left:380px;top:894px;width:46px;height:26px;border:1px solid #e2e2e2;text-align:center;line-height:24px">确定</div>
<div class="a" style="left:435px;top:896px;line-height:22px">共 13 条</div>
<div class="a" style="left:490px;top:894px;width:79px;height:26px;border:1px solid #e2e2e2;line-height:24px;padding-left:7px">15 条/页</div>
<svg class="a" style="left:555px;top:904px" width="9" height="6" viewBox="0 0 9 6"><path d="M1 1l3.500 3.500L8 1" fill="none" stroke="#111" stroke-width="1.800"/></svg>
</body></html>
